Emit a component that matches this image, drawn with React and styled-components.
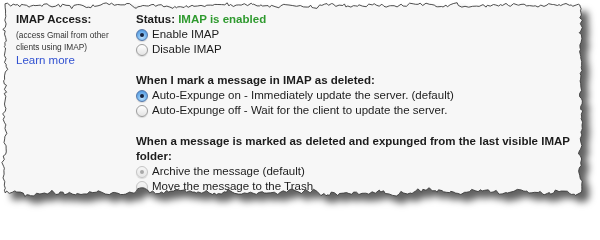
import React from 'react';
import styled, { createGlobalStyle } from 'styled-components';

// torn paper edge, generated once from a fixed seed
const rand = (() => {
  let s = 91173;
  return () => {
    s |= 0; s = (s + 0x6d2b79f5) | 0;
    let t = Math.imul(s ^ (s >>> 15), 1 | s);
    t = (t + Math.imul(t ^ (t >>> 7), 61 | t)) ^ t;
    return ((t ^ (t >>> 14)) >>> 0) / 4294967296;
  };
})();

const edge = (from, to, fixed, amp, horizontal) => {
  const pts = [];
  const dir = to > from ? 1 : -1;
  let p = from;
  let drift = 0;
  while ((to - p) * dir > 0) {
    drift = drift * 0.7 + (rand() - 0.5) * amp;
    const off = fixed + drift + (rand() - 0.5) * amp;
    pts.push(horizontal ? [p, off] : [off, p]);
    p += dir * (1.2 + rand() * 2.8);
  }
  return pts;
};

const points = [
  ...edge(5, 581, 5.5, 2.6, true),
  ...edge(6, 193, 581, 2.2, false),
  ...edge(581, 5, 192, 3.4, true),
  ...edge(193, 6, 5, 2.4, false),
];
const TORN = 'M' + points.map(([x, y]) => `${x.toFixed(1)} ${y.toFixed(1)}`).join(' L') + ' Z';

const GlobalStyle = createGlobalStyle`
  body { margin: 0; background: #fff; }
`;

const Stage = styled.div`
  width: 600px; height: 212px; position: relative;
  filter: drop-shadow(7px 7px 3.5px rgba(0, 0, 0, 0.62));
`;

const Paper = styled.div`
  width: 600px; height: 212px; box-sizing: border-box;
  clip-path: path('${TORN}');
  background: #f7f7f7;
  padding: 12px 0 0 16px;
  display: grid; grid-template-columns: 120px 1fr;
  font-family: "Liberation Sans", Arial, sans-serif;
  font-size: 11.5px; line-height: 15px; color: #1c1c1c;
`;

const Outline = styled.svg`
  position: absolute; inset: 0; pointer-events: none;
`;

const Side = styled.div` display: flex; flex-direction: column; `;

const Title = styled.div` font-weight: 700; `;

const Note = styled.div`
  max-width: 100px;
  font-size: 8.3px; line-height: 12px; margin-top: 1.5px; color: #333;
`;

const Link = styled.a` color: #3151d1; text-decoration: none; `;

const Settings = styled.div` display: flex; flex-direction: column; `;

const Group = styled.div`
  display: flex; flex-direction: column;
  & + & { margin-top: 16px; }
`;

const Heading = styled.div` font-weight: 700; `;

const Status = styled.span` color: #2f9a2f; `;

const Option = styled.label` display: flex; align-items: center; gap: 4px; height: 15px; `;

const Radio = styled.span`
  width: 12px; height: 12px; box-sizing: border-box; border-radius: 50%; flex: none;
  display: flex; align-items: center; justify-content: center;
  border: 1px solid ${({ $on, $disabled }) => ($disabled ? '#c4c4c4' : $on ? '#5577a8' : '#9c9c9c')};
  background: ${({ $on, $disabled }) =>
    $disabled
      ? 'linear-gradient(#f6f6f6, #e6e6e6)'
      : $on
      ? 'radial-gradient(circle at 50% 70%, #c4e2fb 0%, #7ab8ef 45%, #3c86d6 100%)'
      : 'linear-gradient(#ffffff, #e4e4e4)'};
  box-shadow: 0 1px 1px rgba(0, 0, 0, 0.12);
  &::after {
    content: ''; width: 4px; height: 4px; border-radius: 50%;
    background: ${({ $disabled }) => ($disabled ? '#a8a8a8' : '#16233f')};
    display: ${({ $on }) => ($on ? 'block' : 'none')};
  }
`;

const groups = [
  {
    heading: null,
    options: [
      { label: 'Enable IMAP', on: true },
      { label: 'Disable IMAP' },
    ],
  },
  {
    heading: 'When I mark a message in IMAP as deleted:',
    options: [
      { label: 'Auto-Expunge on - Immediately update the server. (default)', on: true },
      { label: 'Auto-Expunge off - Wait for the client to update the server.' },
    ],
  },
  {
    heading: 'When a message is marked as deleted and expunged from the last visible IMAP folder:',
    options: [
      { label: 'Archive the message (default)', on: true, disabled: true },
      { label: 'Move the message to the Trash', disabled: true },
    ],
  },
];

const App = () => (
  <>
    <GlobalStyle />
    <Stage>
      <Paper>
        <Side>
          <Title>IMAP Access:</Title>
          <Note>(access Gmail from other clients using IMAP)</Note>
          <Link href="#">Learn more</Link>
        </Side>
        <Settings>
          {groups.map((g, i) => (
            <Group key={i}>
              {g.heading ? (
                <Heading>{g.heading}</Heading>
              ) : (
                <Heading>Status: <Status>IMAP is enabled</Status></Heading>
              )}
              {g.options.map(o => (
                <Option key={o.label}>
                  <Radio $on={o.on} $disabled={o.disabled} />
                  {o.label}
                </Option>
              ))}
            </Group>
          ))}
        </Settings>
      </Paper>
      <Outline width="600" height="212" viewBox="0 0 600 212">
        <path d={TORN} fill="none" stroke="#3a3a3a" strokeWidth="0.9" strokeLinejoin="round" />
      </Outline>
    </Stage>
  </>
);

export default App;
